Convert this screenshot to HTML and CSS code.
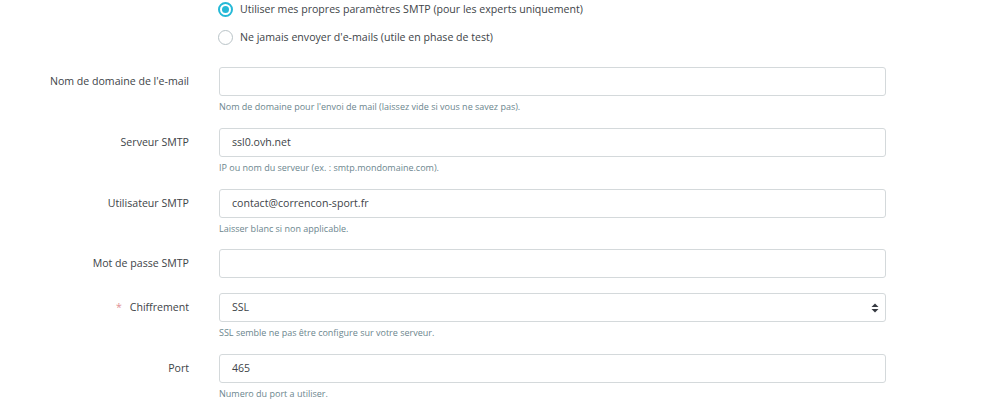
FILE: index.html
```html
<!DOCTYPE html>
<html lang="fr">
<head>
<meta charset="utf-8">
<title>SMTP</title>
<link rel="stylesheet" href="styles.css">
</head>
<body>
<div class="form">
  <div class="radios">
    <div class="radio-line"><span class="radio checked"></span><span class="radio-text">Utiliser mes propres paramètres SMTP (pour les experts uniquement)</span></div>
    <div class="radio-line"><span class="radio"></span><span class="radio-text">Ne jamais envoyer d'e-mails (utile en phase de test)</span></div>
  </div>

  <div class="row">
    <div class="label">Nom de domaine de l'e-mail</div>
    <div class="field">
      <div class="input"></div>
      <div class="help">Nom de domaine pour l'envoi de mail (laissez vide si vous ne savez pas).</div>
    </div>
  </div>

  <div class="row">
    <div class="label">Serveur SMTP</div>
    <div class="field">
      <div class="input">ssl0.ovh.net</div>
      <div class="help">IP ou nom du serveur (ex. : smtp.mondomaine.com).</div>
    </div>
  </div>

  <div class="row">
    <div class="label">Utilisateur SMTP</div>
    <div class="field">
      <div class="input">contact@correncon-sport.fr</div>
      <div class="help">Laisser blanc si non applicable.</div>
    </div>
  </div>

  <div class="row">
    <div class="label">Mot de passe SMTP</div>
    <div class="field">
      <div class="input"></div>
    </div>
  </div>

  <div class="row">
    <div class="label"><span class="req">*</span>Chiffrement</div>
    <div class="field">
      <div class="input select">SSL
        <svg class="arrows" width="8" height="10" viewBox="0 0 8 10"><path d="M4 0.5 L7.5 4 L0.5 4 Z" fill="#363a41"/><path d="M4 9.5 L7.5 6 L0.5 6 Z" fill="#363a41"/></svg>
      </div>
      <div class="help">SSL semble ne pas être configure sur votre serveur.</div>
    </div>
  </div>

  <div class="row">
    <div class="label">Port</div>
    <div class="field">
      <div class="input">465</div>
      <div class="help">Numero du port a utiliser.</div>
    </div>
  </div>
</div>
</body>
</html>
```
FILE: styles.css
```css
html, body {
  margin: 0;
  padding: 0;
  background: #ffffff;
}
body {
  font-family: "Open Sans", "Liberation Sans", sans-serif;
  color: #404448;
  font-size: 10.6px;
  overflow: hidden;
}
.form {
  width: 1000px;
}
.radios {
  margin-left: 218px;
  display: flex;
  flex-direction: column;
  gap: 10px;
}
.radio-line {
  display: flex;
  align-items: center;
  height: 18px;
}
.radio {
  box-sizing: border-box;
  width: 15px;
  height: 15px;
  border-radius: 50%;
  border: 1px solid #b9c3c7;
  margin-right: 7px;
  flex: none;
  position: relative;
}
.radio.checked {
  border: 2px solid #25b9d7;
}
.radio.checked::after {
  content: "";
  position: absolute;
  left: 2px;
  top: 2px;
  width: 7px;
  height: 7px;
  border-radius: 50%;
  background: #25b9d7;
}
.radio-text {
  font-size: 10.6px;
  color: #404448;
}
.radios + .row {
  margin-top: 21px;
}
.row {
  display: grid;
  grid-template-columns: 189px 667px;
  column-gap: 30px;
  margin-bottom: 14.75px;
}
.label {
  text-align: right;
  height: 29px;
  line-height: 28px;
  font-size: 10.6px;
  color: #404448;
}
.req {
  color: #e08f95;
  margin-right: 8px;
}
.input {
  box-sizing: border-box;
  height: 29px;
  border: 1px solid #d4d9db;
  border-radius: 3px;
  padding: 0 12px;
  line-height: 27px;
  font-size: 10.6px;
  color: #404448;
  background: #fff;
  position: relative;
}
.select .arrows {
  position: absolute;
  right: 6px;
  top: 9px;
}
.help {
  margin-top: 4px;
  height: 13px;
  line-height: 13px;
  font-size: 9px;
  color: #6c868e;
}
```
